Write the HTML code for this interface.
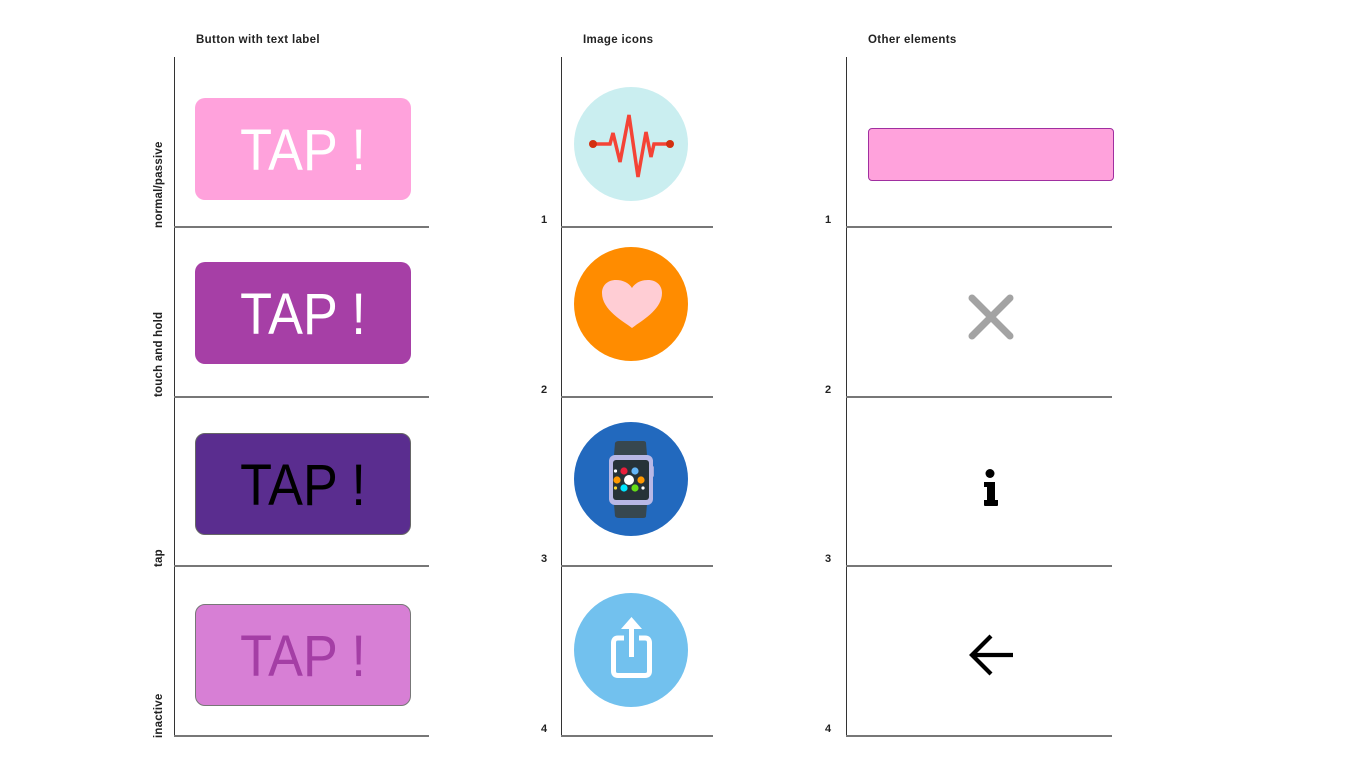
<!DOCTYPE html>
<html><head><meta charset="utf-8"><style>
html,body{margin:0;padding:0;background:#fff;width:1366px;height:768px;overflow:hidden;position:relative;font-family:"Liberation Sans",sans-serif}
.a{position:absolute}
.h{font-size:11.5px;font-weight:bold;color:#222;letter-spacing:0.35px}
.vl{background:#333;width:1px}
.hl{background:#777;height:2px}
.btn{position:absolute;left:195px;width:216px;height:102px;border-radius:10px;box-sizing:border-box}
.btn span{position:absolute;left:0;right:0;top:50%;text-align:center;font-size:58px;line-height:58px;margin-top:-27px;font-family:"Liberation Sans",sans-serif;transform:scaleX(0.9);letter-spacing:0px}
.rl{position:absolute;font-size:11.5px;font-weight:bold;color:#222;transform-origin:left top;transform:rotate(-90deg);white-space:nowrap;letter-spacing:0.2px}
.n{position:absolute;font-size:11px;font-weight:bold;color:#222}
.c{position:absolute;left:574px;width:114px;height:114px;border-radius:50%}
</style></head><body>
<div class="a h" style="left:196px;top:34px">Button with text label</div>
<div class="a h" style="left:583px;top:34px">Image icons</div>
<div class="a h" style="left:868px;top:34px">Other elements</div>

<div class="a vl" style="left:174px;top:57px;height:680px"></div>
<div class="a vl" style="left:561px;top:57px;height:680px"></div>
<div class="a vl" style="left:846px;top:57px;height:680px"></div>

<div class="a hl" style="left:174px;top:226px;width:255px"></div>
<div class="a hl" style="left:174px;top:396px;width:255px"></div>
<div class="a hl" style="left:174px;top:565px;width:255px"></div>
<div class="a hl" style="left:174px;top:735px;width:255px"></div>
<div class="a hl" style="left:561px;top:226px;width:152px"></div>
<div class="a hl" style="left:561px;top:396px;width:152px"></div>
<div class="a hl" style="left:561px;top:565px;width:152px"></div>
<div class="a hl" style="left:561px;top:735px;width:152px"></div>
<div class="a hl" style="left:846px;top:226px;width:266px"></div>
<div class="a hl" style="left:846px;top:396px;width:266px"></div>
<div class="a hl" style="left:846px;top:565px;width:266px"></div>
<div class="a hl" style="left:846px;top:735px;width:266px"></div>

<div class="rl" style="left:153px;top:228px">normal/passive</div>
<div class="rl" style="left:153px;top:397px">touch and hold</div>
<div class="rl" style="left:153px;top:567px">tap</div>
<div class="rl" style="left:153px;top:738px">inactive</div>

<div class="n" style="left:541px;top:214px">1</div>
<div class="n" style="left:541px;top:384px">2</div>
<div class="n" style="left:541px;top:553px">3</div>
<div class="n" style="left:541px;top:723px">4</div>
<div class="n" style="left:825px;top:214px">1</div>
<div class="n" style="left:825px;top:384px">2</div>
<div class="n" style="left:825px;top:553px">3</div>
<div class="n" style="left:825px;top:723px">4</div>

<div class="btn" style="top:98px;background:#ffa2dc"><span style="color:#fff">TAP !</span></div>
<div class="btn" style="top:262px;background:#a63fa6"><span style="color:#fff">TAP !</span></div>
<div class="btn" style="top:433px;background:#5a2d8f;border:1px solid #666"><span style="color:#000">TAP !</span></div>
<div class="btn" style="top:604px;background:#d77fd5;border:1px solid #777"><span style="color:#a43ea5">TAP !</span></div>

<div class="c" style="top:87px;background:#caeef0"></div>
<svg class="a" style="left:574px;top:87px" width="114" height="114" viewBox="0 0 114 114">
<polyline points="19,57 36,57 39,46 46,75 55,28 64,90 72,45 77,70 80,57 96,57" fill="none" stroke="#f44336" stroke-width="3.5" stroke-linejoin="miter"/>
<circle cx="19" cy="57" r="4" fill="#d32f10"/><circle cx="96" cy="57" r="4" fill="#d32f10"/>
</svg>

<div class="c" style="top:247px;background:#ff8c00"></div>
<svg class="a" style="left:574px;top:247px" width="114" height="114" viewBox="0 0 114 114">
<path d="M58,81 C49,74 28,63 28,46 C28,38 34,33 42,33 C49,33 55,36 58,41 C61,36 67,33 74,33 C82,33 88,38 88,46 C88,63 67,74 58,81 Z" fill="#ffcdd4"/>
</svg>

<div class="c" style="top:422px;background:#2269be"></div>
<svg class="a" style="left:574px;top:422px" width="114" height="114" viewBox="0 0 114 114">
<path d="M40,33 L41,21 Q42,19 45,19 L69,19 Q72,19 72,21 L73,33 Z" fill="#37474f"/>
<path d="M40,82 L41,94 Q42,96 45,96 L69,96 Q72,96 72,94 L73,82 Z" fill="#37474f"/>
<rect x="76" y="44" width="4" height="11" rx="1.5" fill="#9fa8da"/>
<rect x="35" y="33" width="44" height="50" rx="6" fill="#b8b8e6"/>
<rect x="39" y="38" width="36" height="40" rx="3" fill="#263238"/>
<circle cx="50" cy="49" r="3.6" fill="#e91e3a"/><circle cx="61" cy="49" r="3.6" fill="#64b5f6"/>
<circle cx="41.5" cy="49" r="1.6" fill="#fff"/>
<circle cx="43" cy="58" r="3.6" fill="#ff9800"/><circle cx="55" cy="58" r="5" fill="#fff"/><circle cx="67" cy="58" r="3.6" fill="#ff9800"/>
<circle cx="41.5" cy="66" r="1.6" fill="#fdd835"/><circle cx="50" cy="66" r="3.6" fill="#00e5ff"/><circle cx="61" cy="66" r="3.6" fill="#64dd17"/><circle cx="69" cy="66" r="1.6" fill="#fff"/>
</svg>

<div class="c" style="top:593px;background:#72c1ee"></div>
<svg class="a" style="left:574px;top:593px" width="114" height="114" viewBox="0 0 114 114">
<path d="M50,45 L44,45 Q39.5,45 39.5,50 L39.5,78 Q39.5,82.5 44,82.5 L71,82.5 Q75.5,82.5 75.5,78 L75.5,50 Q75.5,45 71,45 L65,45" fill="none" stroke="#fff" stroke-width="5"/>
<rect x="55" y="34" width="5" height="30" fill="#fff"/>
<path d="M47,36 L57.5,24 L68,36 Z" fill="#fff"/>
</svg>

<div class="a" style="left:868px;top:128px;width:246px;height:53px;box-sizing:border-box;background:#ffa2dc;border:1px solid #a02fa0;border-radius:4px"></div>

<svg class="a" style="left:966px;top:292px" width="50" height="50" viewBox="0 0 50 50">
<path d="M6,6 L44,44 M44,6 L6,44" stroke="#a3a3a3" stroke-width="7" stroke-linecap="round"/>
</svg>

<svg class="a" style="left:975px;top:466px" width="30" height="42" viewBox="0 0 30 42">
<circle cx="15" cy="7.5" r="4.5" fill="#000"/>
<path d="M9,16 L20,16 L20,34 L23,34 L23,39 Q23,40 22,40 L10,40 Q9,40 9,39 L9,34 L12,34 L12,21 L9,21 Z" fill="#000"/>
</svg>

<svg class="a" style="left:964px;top:632px" width="52" height="48" viewBox="0 0 52 48">
<path d="M49,23 L8,23 M27,4 L8,23 L27,42" fill="none" stroke="#000" stroke-width="4.2"/>
</svg>
</body></html>
